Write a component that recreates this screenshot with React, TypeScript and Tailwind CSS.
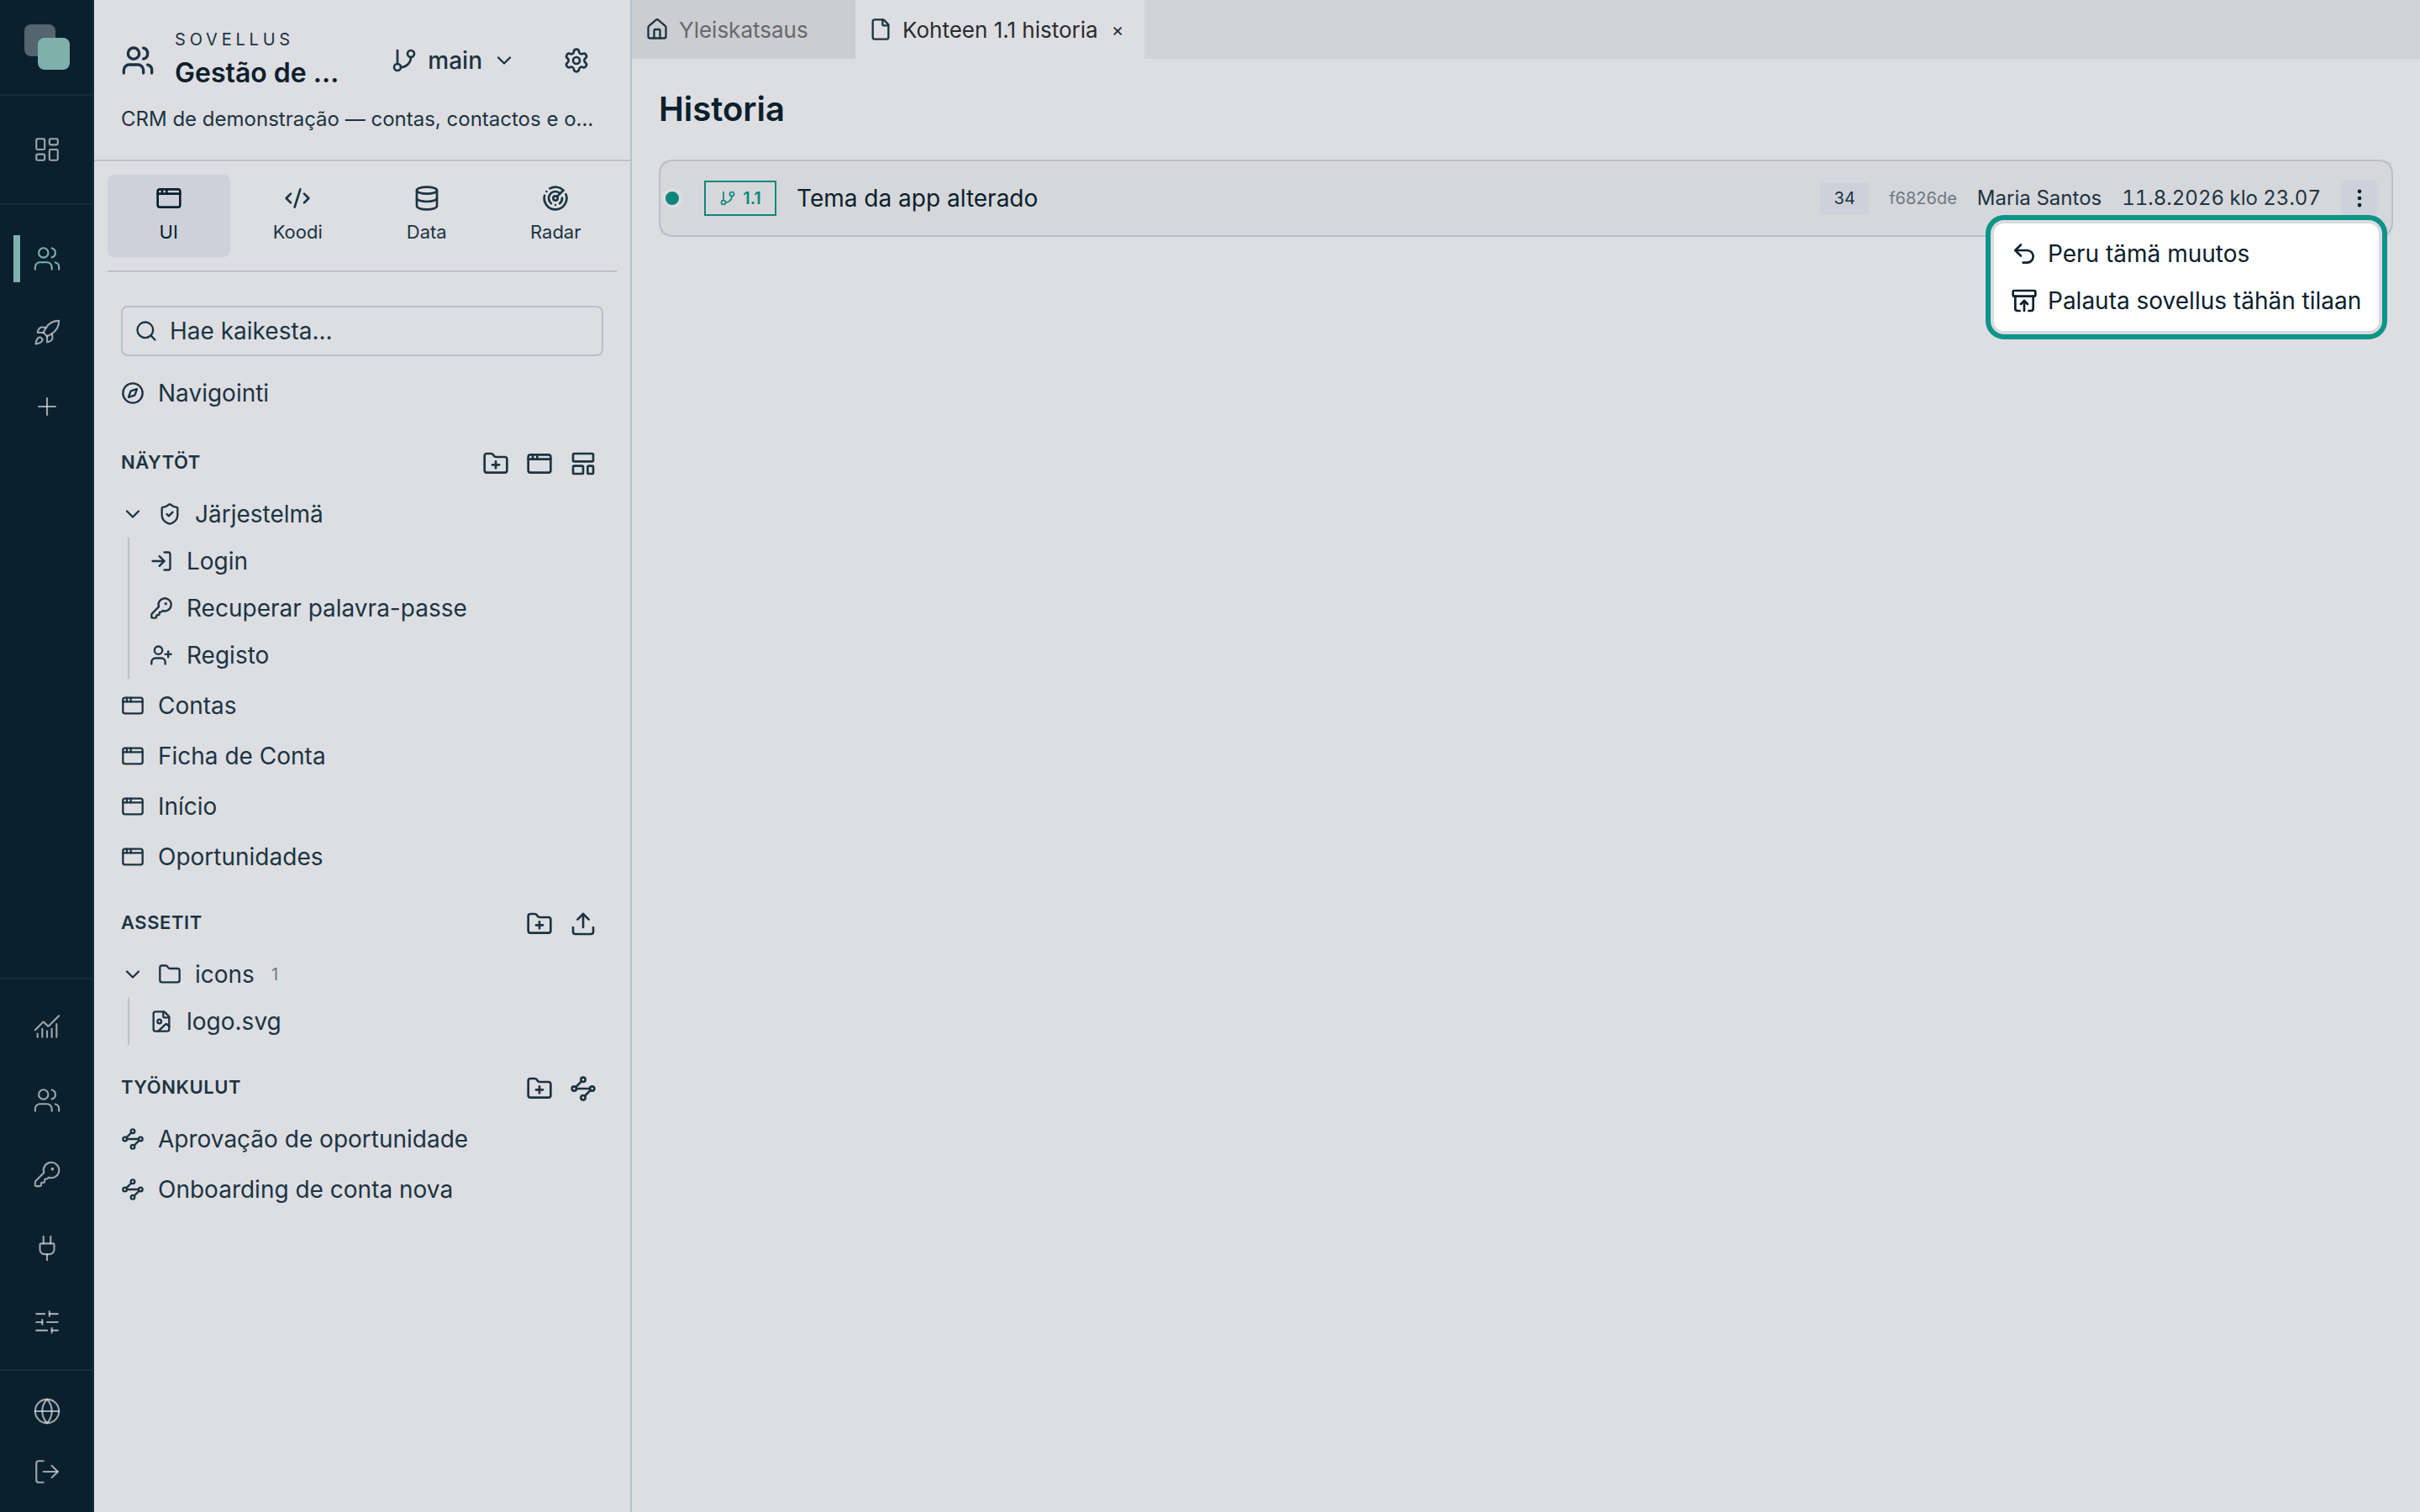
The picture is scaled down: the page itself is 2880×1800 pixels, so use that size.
import React from 'react';
import {
  AppWindow,
  ArchiveRestore,
  ChartNoAxesCombined,
  ChevronDown,
  CodeXml,
  Compass,
  Database,
  EllipsisVertical,
  File,
  FileImage,
  Folder,
  FolderPlus,
  GitBranch,
  Globe,
  House,
  KeyRound,
  LayoutDashboard,
  LayoutTemplate,
  LogIn,
  LogOut,
  Plug,
  Plus,
  Radar,
  Rocket,
  Search,
  Settings,
  ShieldCheck,
  SlidersHorizontal,
  Undo2,
  Upload,
  UserPlus,
  Users,
} from 'lucide-react';

type IconType = React.ComponentType<{ size?: number; strokeWidth?: number; className?: string }>;

const Workflow: IconType = ({ size = 24, strokeWidth = 2, className }) => (
  <svg
    width={size}
    height={size}
    viewBox="0 0 24 24"
    fill="none"
    stroke="currentColor"
    strokeWidth={strokeWidth}
    strokeLinecap="round"
    strokeLinejoin="round"
    className={className}
  >
    <circle cx="12" cy="4" r="2" />
    <path d="m10.586 5.414-5.172 5.172" />
    <circle cx="4" cy="12" r="2" />
    <path d="M6 12h12" />
    <circle cx="20" cy="12" r="2" />
    <path d="m18.586 13.414-5.172 5.172" />
    <circle cx="12" cy="20" r="2" />
  </svg>
);

interface RailButtonProps {
  icon: IconType;
  active?: boolean;
  className?: string;
}

const RailButton: React.FC<RailButtonProps> = ({ icon: Icon, active, className = 'h-20' }) => (
  <button className={`relative flex w-full items-center justify-center ${className}`}>
    {active && <span className="absolute left-4 h-14 w-2 bg-[#7fb1ac]"></span>}
    <Icon
      size={34}
      strokeWidth={1.5}
      className={`ml-0.5 ${active ? 'text-[#7fb1ac]' : 'text-[#dddee2]/70'}`}
    />
  </button>
);

const Rail: React.FC = () => (
  <nav className="flex w-28 shrink-0 flex-col border-r-2 border-[#132d3a] bg-[#0a202d]">
    <div className="flex h-[114px] items-center justify-center border-b-2 border-[#132d3a]">
      <svg width="54" height="54" viewBox="0 0 54 54" className="ml-0.5">
        <rect width="37" height="38" rx="8" fill="#56646d" />
        <rect x="16" y="16" width="38" height="38" rx="8" fill="#7fb1ac" />
      </svg>
    </div>
    <div className="flex h-[130px] flex-col justify-center border-b-2 border-[#132d3a]">
      <RailButton icon={LayoutDashboard} />
    </div>
    <div className="flex flex-1 flex-col gap-2 py-6">
      <RailButton icon={Users} active />
      <RailButton icon={Rocket} />
      <RailButton icon={Plus} />
    </div>
    <div className="flex flex-col gap-2 border-t-2 border-[#132d3a] py-4">
      <RailButton icon={ChartNoAxesCombined} />
      <RailButton icon={Users} />
      <RailButton icon={KeyRound} />
      <RailButton icon={Plug} />
      <RailButton icon={SlidersHorizontal} />
    </div>
    <div className="flex flex-col gap-2 border-t-2 border-[#132d3a] py-4">
      <RailButton icon={Globe} className="h-16" />
      <RailButton icon={LogOut} className="h-16" />
    </div>
  </nav>
);

const modes: { label: string; icon: IconType }[] = [
  { label: 'UI', icon: AppWindow },
  { label: 'Koodi', icon: CodeXml },
  { label: 'Data', icon: Database },
  { label: 'Radar', icon: Radar },
];

interface TreeItemProps {
  icon: IconType;
  label: string;
  count?: number;
  expandable?: boolean;
}

const TreeItem: React.FC<TreeItemProps> = ({ icon: Icon, label, count, expandable }) => (
  <div className="flex h-14 items-center gap-4">
    {expandable && <ChevronDown size={28} />}
    <Icon size={28} />
    <span className="text-[28px]">{label}</span>
    {count !== undefined && <span className="ml-1 text-xl text-[#6a7983]">{count}</span>}
  </div>
);

const TreeChildren: React.FC<{ children: React.ReactNode }> = ({ children }) => (
  <div className="ml-2 border-l-2 border-[#b8c1c8] pl-6">{children}</div>
);

interface TreeSectionProps {
  title: string;
  actions: IconType[];
  children: React.ReactNode;
}

const TreeSection: React.FC<TreeSectionProps> = ({ title, actions, children }) => (
  <section className="mt-7">
    <div className="mb-2 flex h-12 items-center justify-between">
      <h3 className="pb-[3px] text-[22px] font-semibold tracking-wide">{title}</h3>
      <div className="flex gap-1">
        {actions.map((Icon, index) => (
          <button key={index} className="flex size-12 items-center justify-center">
            <Icon size={32} />
          </button>
        ))}
      </div>
    </div>
    <div className="flex flex-col gap-1">{children}</div>
  </section>
);

const Sidebar: React.FC = () => (
  <aside className="flex w-[640px] shrink-0 flex-col border-r-2 border-[#b8c1c8] text-[#1b3442]">
    <header className="h-48 border-b-2 border-[#b8c1c8] px-8 pt-8">
      <div className="flex h-20 items-center">
        <Users size={40} />
        <div className="ml-6 w-[210px]">
          <div className="pt-px text-xl leading-[29px] tracking-[0.24em]">SOVELLUS</div>
          <div className="text-[32px] leading-[50px] font-semibold whitespace-nowrap text-[#0a202d]">Gestão de …</div>
        </div>
        <div className="ml-auto flex items-center">
          <GitBranch size={32} />
          <span className="ml-3 text-[28px] font-medium">main</span>
          <ChevronDown size={28} className="ml-3" />
        </div>
        <button className="ml-10 flex size-16 items-center justify-center">
          <Settings size={32} />
        </button>
      </div>
      <p className="mt-3 text-2xl leading-9 whitespace-nowrap">CRM de demonstração — contas, contactos e o…</p>
    </header>

    <div className="mx-4 flex gap-2 border-b-2 border-[#b8c1c8] py-4">
      {modes.map((mode, index) => (
        <button
          key={mode.label}
          className={`flex h-[98px] flex-1 flex-col items-center rounded-lg pt-3 ${
            index === 0 ? 'bg-[#ced1da] text-[#0a202d]' : ''
          }`}
        >
          <mode.icon size={32} />
          <span className="mt-2 text-[22px] leading-8">{mode.label}</span>
        </button>
      ))}
    </div>

    <div className="px-8 pt-10">
      <div className="mb-4 flex h-[60px] items-center rounded-lg border-2 border-[#b8c1c8] px-3.5">
        <Search size={28} />
        <span className="ml-3.5 text-[28px]">Hae kaikesta...</span>
      </div>
      <TreeItem icon={Compass} label="Navigointi" />

      <div className="pt-1">
        <TreeSection title="NÄYTÖT" actions={[FolderPlus, AppWindow, LayoutTemplate]}>
          <div>
            <TreeItem icon={ShieldCheck} label="Järjestelmä" expandable />
            <TreeChildren>
              <TreeItem icon={LogIn} label="Login" />
              <TreeItem icon={KeyRound} label="Recuperar palavra-passe" />
              <TreeItem icon={UserPlus} label="Registo" />
            </TreeChildren>
          </div>
          <TreeItem icon={AppWindow} label="Contas" />
          <TreeItem icon={AppWindow} label="Ficha de Conta" />
          <TreeItem icon={AppWindow} label="Início" />
          <TreeItem icon={AppWindow} label="Oportunidades" />
        </TreeSection>
      </div>

      <TreeSection title="ASSETIT" actions={[FolderPlus, Upload]}>
        <div>
          <TreeItem icon={Folder} label="icons" count={1} expandable />
          <TreeChildren>
            <TreeItem icon={FileImage} label="logo.svg" />
          </TreeChildren>
        </div>
      </TreeSection>

      <TreeSection title="TYÖNKULUT" actions={[FolderPlus, Workflow]}>
        <TreeItem icon={Workflow} label="Aprovação de oportunidade" />
        <TreeItem icon={Workflow} label="Onboarding de conta nova" />
      </TreeSection>
    </div>
  </aside>
);

const TabBar: React.FC = () => (
  <div className="flex h-[70px] bg-[#d2d3d7] text-[26px]">
    <div className="flex w-[266px] items-center bg-[#cccdd1] pl-4">
      <House size={28} className="text-[#1b3442]" />
      <span className="ml-3 text-[#66686c]">Yleiskatsaus</span>
    </div>
    <div className="flex w-[344px] items-center bg-[#dddee2] pl-4">
      <File size={28} className="text-[#1b3442]" />
      <span className="ml-3 text-[#2a2b2e]">Kohteen 1.1 historia</span>
      <span className="ml-4 text-[22px] text-[#2a2b2e]">×</span>
    </div>
  </div>
);

const HistoryMenu: React.FC = () => (
  <div className="absolute top-[64px] right-[5px] z-10 h-[148px] w-[478px] rounded-[22px] border-6 border-[#0d9488] bg-[#dadbdf] p-1">
    <div className="h-full rounded-xl bg-white pt-2 pl-5 text-[28px] text-[#0a202d]">
      <div className="flex h-14 items-center gap-3">
        <Undo2 size={32} />
        <span>Peru tämä muutos</span>
      </div>
      <div className="flex h-14 items-center gap-3">
        <ArchiveRestore size={32} />
        <span className="whitespace-nowrap">Palauta sovellus tähän tilaan</span>
      </div>
    </div>
  </div>
);

const HistoryRow: React.FC = () => (
  <div className="relative h-[92px] rounded-2xl border-2 border-[#b8c1c8]">
    <div className="flex h-full items-center bg-black/[0.03] pr-4 pl-0.5 text-[#1b3442]">
      <span className="size-6 rounded-full border-4 border-[#dddee2] bg-[#10857b]"></span>
      <span className="ml-[26px] flex h-[42px] w-[86px] items-center justify-center gap-2 border-2 border-[#10857b] text-xl font-semibold text-[#10857b]">
        <GitBranch size={20} />
        1.1
      </span>
      <span className="ml-6 text-[28px] text-[#0a202d]">Tema da app alterado</span>
      <div className="ml-auto flex items-center text-2xl">
        <span className="flex h-[38px] w-[58px] items-center justify-center bg-[#ced1da] text-xl">34</span>
        <span className="ml-6 text-xl text-[#6a7983]">f6826de</span>
        <span className="ml-6">Maria Santos</span>
        <span className="ml-6 tabular-nums">11.8.2026 klo 23.07</span>
        <button className="ml-6 flex size-11 items-center justify-center rounded-lg bg-[#ced1da] text-[#0a202d]">
          <EllipsisVertical size={28} />
        </button>
      </div>
    </div>
    <HistoryMenu />
  </div>
);

const App: React.FC = () => (
  <div className="flex h-[1800px] w-[2880px] overflow-hidden bg-[#dddee2] font-[Inter,sans-serif]">
    <Rail />
    <Sidebar />
    <main className="flex-1">
      <TabBar />
      <div className="px-8 pt-8">
        <h1 className="mb-8 text-[40px] leading-14 font-semibold text-[#0a202d]">Historia</h1>
        <HistoryRow />
      </div>
    </main>
  </div>
);

export default App;
